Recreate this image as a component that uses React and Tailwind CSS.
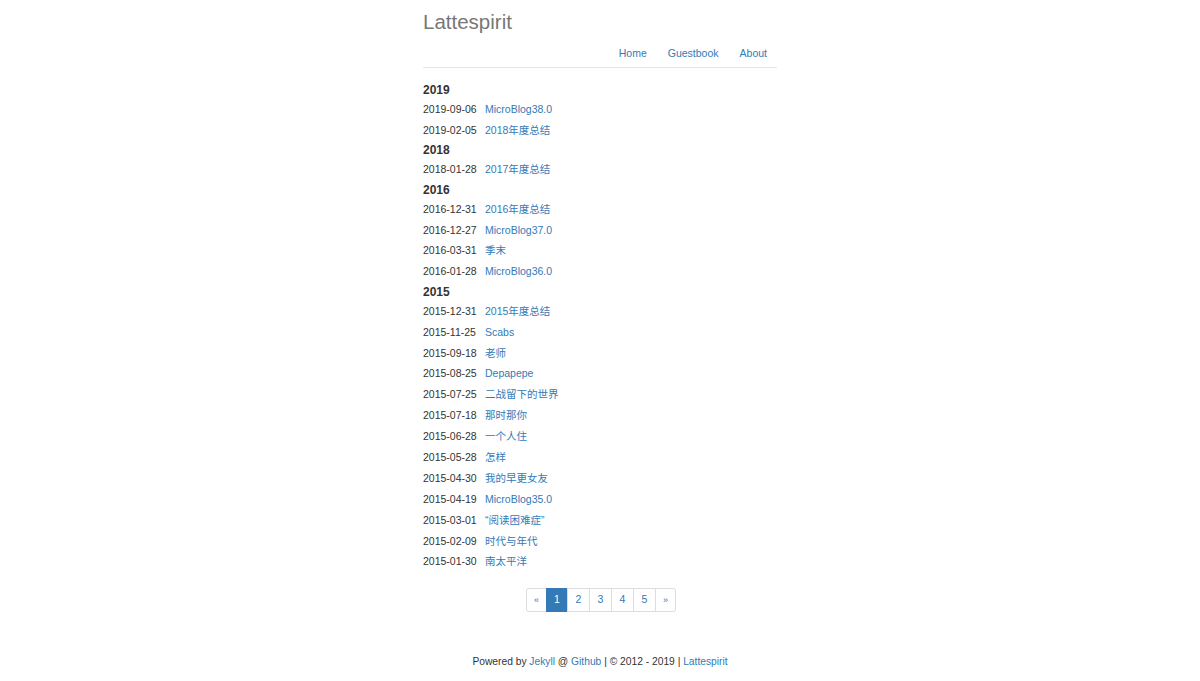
import React from "react";

const groups = [
  { year: "2019", items: [["2019-09-06", "MicroBlog38.0"], ["2019-02-05", "2018年度总结"]] },
  { year: "2018", items: [["2018-01-28", "2017年度总结"]] },
  {
    year: "2016",
    items: [
      ["2016-12-31", "2016年度总结"],
      ["2016-12-27", "MicroBlog37.0"],
      ["2016-03-31", "季末"],
      ["2016-01-28", "MicroBlog36.0"],
    ],
  },
  {
    year: "2015",
    items: [
      ["2015-12-31", "2015年度总结"],
      ["2015-11-25", "Scabs"],
      ["2015-09-18", "老师"],
      ["2015-08-25", "Depapepe"],
      ["2015-07-25", "二战留下的世界"],
      ["2015-07-18", "那时那你"],
      ["2015-06-28", "一个人住"],
      ["2015-05-28", "怎样"],
      ["2015-04-30", "我的早更女友"],
      ["2015-04-19", "MicroBlog35.0"],
      ["2015-03-01", "“阅读困难症”"],
      ["2015-02-09", "时代与年代"],
      ["2015-01-30", "南太平洋"],
    ],
  },
];

const font = { fontFamily: '"Liberation Sans", Arial, "Noto Sans CJK SC", sans-serif' };

export default function App() {
  return (
    <div className="min-h-[681px] bg-white text-[#333] text-[10.5px]" style={font}>
      <div className="w-[354px] mx-auto">
        <div className="pt-[10px] h-[34px] text-[20.5px] leading-[24px] text-[#777]">Lattespirit</div>
        <div className="mt-[9px] pb-[4px] border-b border-[#e5e5e5] flex justify-end">
          <a className="px-[10.5px] h-[20px] leading-[20px] text-[#337ab7]">Home</a>
          <a className="px-[10.5px] h-[20px] leading-[20px] text-[#337ab7]">Guestbook</a>
          <a className="pl-[10.5px] pr-[10px] h-[20px] leading-[20px] text-[#337ab7]">About</a>
        </div>
        <div className="mt-[14px]">
          {groups.map((g) => (
            <div key={g.year}>
              <div className="mt-[1.5px] h-[17px] leading-[17px] text-[12px] font-bold text-[#333]">{g.year}</div>
              {g.items.map(([d, t]) => (
                <div key={d} className="h-[20.9px] leading-[21px] flex">
                  <span className="w-[62px]">{d}</span>
                  <a className="text-[#337ab7]">{t}</a>
                </div>
              ))}
            </div>
          ))}
        </div>
        <div className="mt-[16px] flex justify-center pl-[2px]">
          <div className="flex h-[24px] text-[#337ab7] text-[10.5px]">
            <span className="w-[21px] flex items-center justify-center border border-[#ddd] rounded-l-[3px] text-[9px]">«</span>
            <span className="w-[22px] flex items-center justify-center bg-[#337ab7] border border-[#337ab7] text-white -ml-px">1</span>
            <span className="w-[23px] flex items-center justify-center border border-[#ddd] -ml-px">2</span>
            <span className="w-[23px] flex items-center justify-center border border-[#ddd] -ml-px">3</span>
            <span className="w-[23px] flex items-center justify-center border border-[#ddd] -ml-px">4</span>
            <span className="w-[23px] flex items-center justify-center border border-[#ddd] -ml-px">5</span>
            <span className="w-[21px] flex items-center justify-center border border-[#ddd] rounded-r-[3px] -ml-px text-[9px]">»</span>
          </div>
        </div>
        <div className="mt-[42px] text-center h-[16px] leading-[16px] text-[10.25px] text-[#333]">
          Powered by <a className="text-[#337ab7]">Jekyll</a> @ <a className="text-[#337ab7]">Github</a> | © 2012 - 2019 |{" "}
          <a className="text-[#337ab7]">Lattespirit</a>
        </div>
      </div>
    </div>
  );
}
